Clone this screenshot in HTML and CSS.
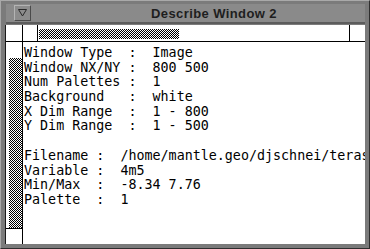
FILE: index.html
```html
<!DOCTYPE html>
<html lang="en">
<head>
    <meta charset="UTF-8">
    <title>Describe Window 2</title>
    <link rel="stylesheet" href="styles.css">
</head>
<body>
    <div class="frame">
        <div class="titlebar">
            <div class="menu-btn">
                <svg width="10" height="8" viewBox="0 0 10 8"><path d="M0.5 0.5 H8.5 L4.5 7 Z" fill="none" stroke="#2a2a2a" stroke-width="1"/></svg>
            </div>
            <div class="title">Describe Window 2</div>
        </div>

        <div class="body">
            <div class="corner"></div>

            <div class="hscroll">
                <div class="hs-end"></div>
                <div class="hs-trough"><div class="hs-thumb"></div></div>
                <div class="hs-end right"></div>
            </div>

            <div class="vscroll">
                <div class="vs-trough"><div class="vs-thumb"></div></div>
                <div class="vs-end"></div>
            </div>

            <div class="text">
                <div class="line">Window Type  :  Image</div>
                <div class="line">Window NX/NY :  800 500</div>
                <div class="line">Num Palettes :  1</div>
                <div class="line">Background   :  white</div>
                <div class="line">X Dim Range  :  1 - 800</div>
                <div class="line">Y Dim Range  :  1 - 500</div>
                <div class="line"> </div>
                <div class="line">Filename :  /home/mantle.geo/djschnei/teras</div>
                <div class="line">Variable :  4m5</div>
                <div class="line">Min/Max  :  -8.34 7.76</div>
                <div class="line">Palette  :  1</div>
            </div>
        </div>
    </div>
</body>
</html>
```

FILE: styles.css
```css
* {
    margin: 0;
    padding: 0;
    box-sizing: border-box;
}

body {
    width: 370px;
    height: 249px;
    background-color: #7b7b7b;
    overflow: hidden;
}

.frame {
    width: 370px;
    height: 249px;
    display: flex;
    flex-direction: column;
    padding: 3px 4px 4px 4px;
    background-color: #7b7b7b;
    border-top: 1px solid #a9a9a9;
    border-left: 1px solid #a9a9a9;
    border-right: 1px solid #2e2e2e;
    border-bottom: 1px solid #2e2e2e;
}

.titlebar {
    height: 20px;
    display: flex;
    align-items: center;
    background-color: #8a8a8a;
    border-bottom: 2px solid #5c5c5c;
    margin-left: 1px;
}

.menu-btn {
    width: 17px;
    height: 16px;
    margin-left: 8px;
    display: flex;
    align-items: center;
    justify-content: center;
    background-color: #8c8c8c;
    border-top: 1px solid #b4b4b4;
    border-left: 1px solid #b4b4b4;
    border-right: 1px solid #4a4a4a;
    border-bottom: 1px solid #4a4a4a;
}

.title {
    flex: 1;
    text-align: center;
    margin-left: 32px;
    font-family: "Liberation Sans", Arial, sans-serif;
    font-weight: bold;
    font-size: 13px;
    letter-spacing: 0.4px;
    color: #1e1e1e;
}

.body {
    flex: 1;
    display: grid;
    grid-template-columns: 17px 1fr;
    grid-template-rows: 17px 1fr;
    background-color: #fff;
    border-left: 1px solid #1a1a1a;
    margin-top: 1px;
    overflow: hidden;
}

.corner {
    border-right: 1px solid #000;
    border-bottom: 1px solid #000;
}

.hscroll {
    display: flex;
    border-bottom: 1px solid #000;
}

.hs-end {
    width: 15px;
    border-right: 1px solid #000;
}

.hs-end.right {
    width: 16px;
    border-right: none;
    border-left: 1px solid #000;
}

.hs-trough {
    flex: 1;
    padding: 4px 0 2px 1px;
}

.hs-thumb {
    width: 140px;
    height: 10px;
    background: repeating-conic-gradient(#000 0 25%, #fff 0 50%) 0 0 / 2px 2px;
}

.vscroll {
    display: flex;
    flex-direction: column;
    border-right: 1px solid #000;
}

.vs-trough {
    flex: 1;
    padding: 16px 0 0 3px;
}

.vs-thumb {
    height: 170px;
    background: repeating-conic-gradient(#000 0 25%, #fff 0 50%) 0 0 / 2px 2px;
}

.vs-end {
    height: 17px;
    border-top: 1px solid #000;
}

.text {
    padding: 4px 0 0 1px;
    font-family: "DejaVu Sans Mono", monospace;
    font-size: 13.35px;
    line-height: 14.7px;
    color: #000;
    overflow: hidden;
}

.line {
    white-space: pre;
    height: 14.7px;
}
```
